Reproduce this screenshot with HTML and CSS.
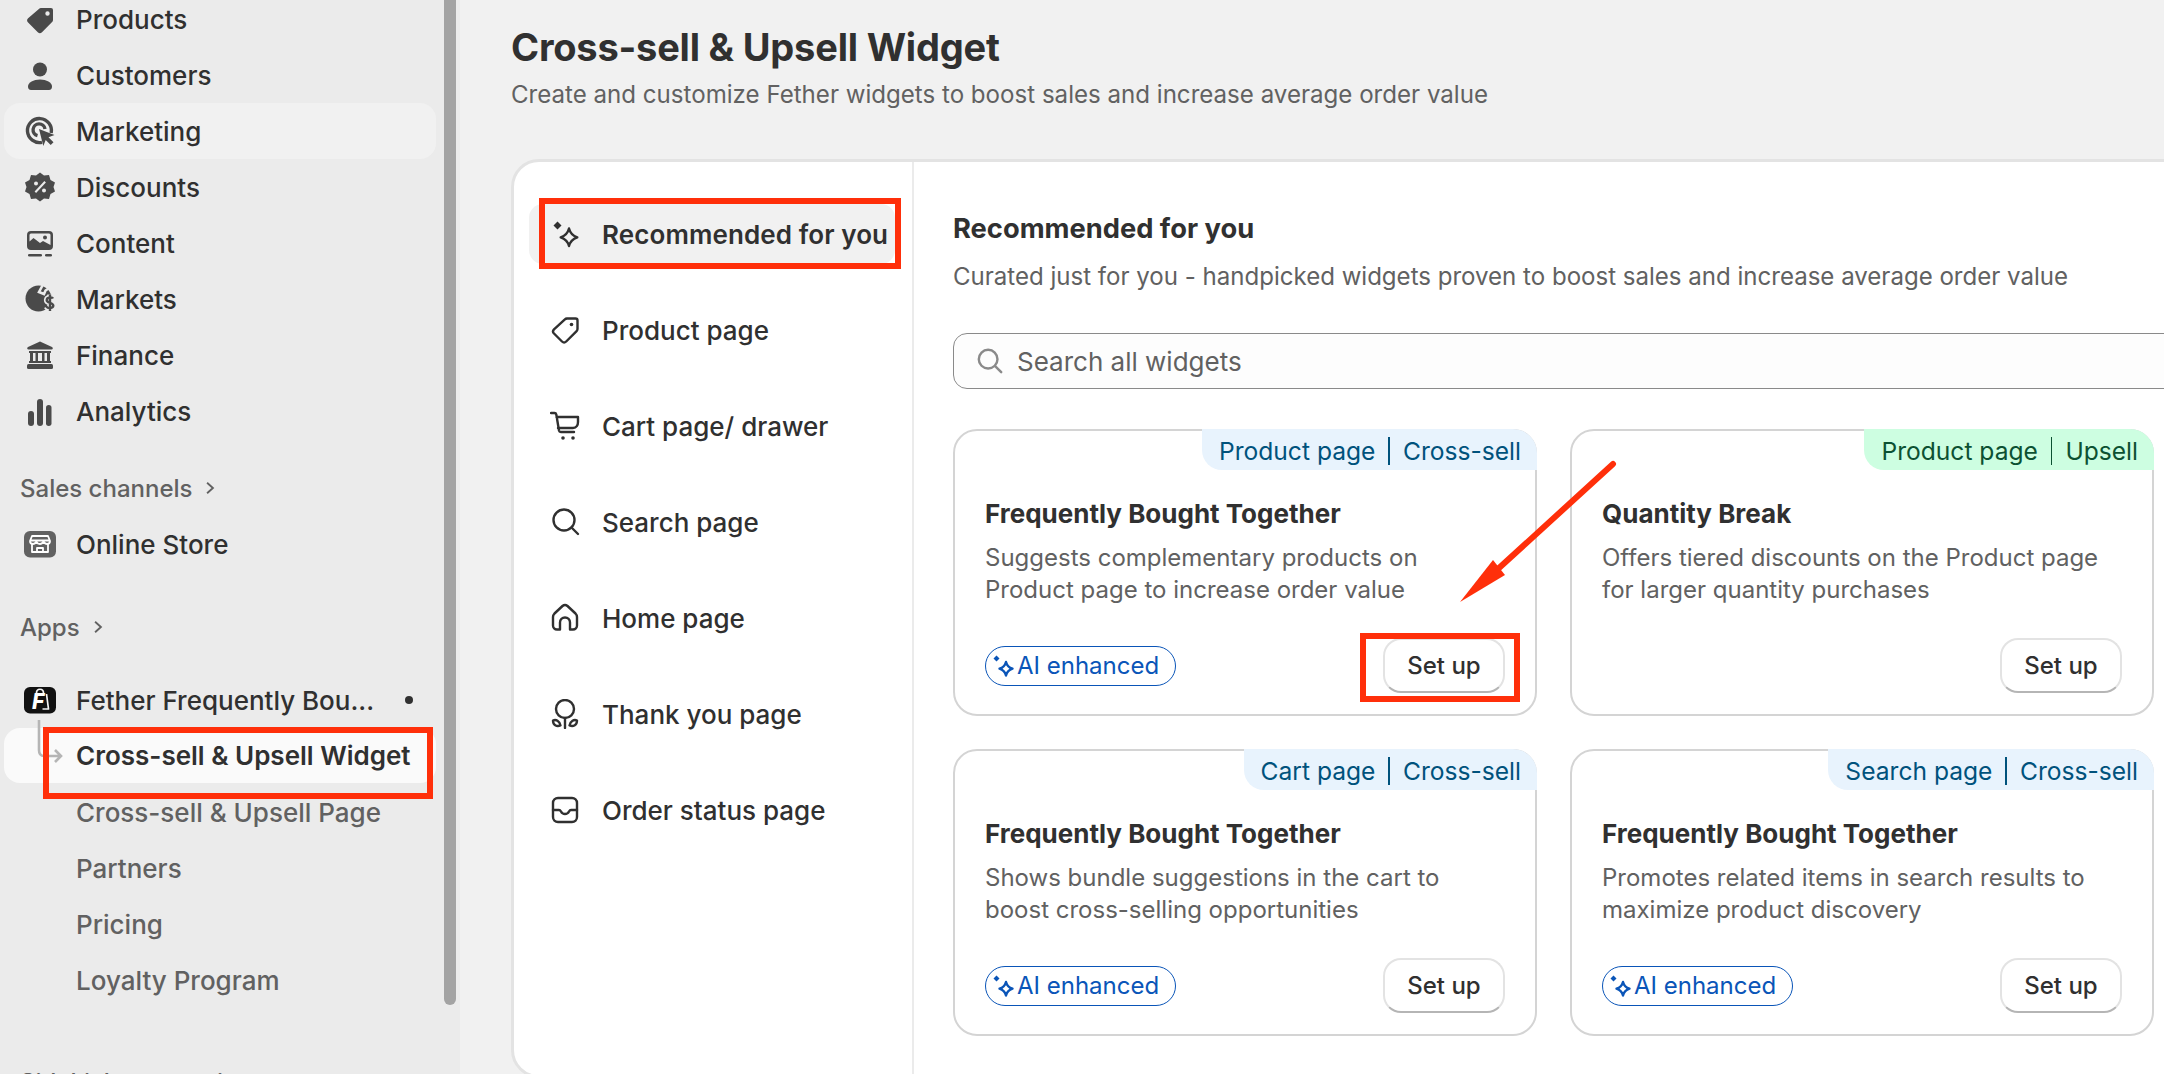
FILE: index.html
```html
<!DOCTYPE html>
<html lang="en">
<head>
<meta charset="utf-8">
<title>Cross-sell &amp; Upsell Widget</title>
<link rel="stylesheet" href="styles.css">
</head>
<body>
<aside class="sidebar">
  <nav class="nav">
    <a class="row"><svg class="ico" viewBox="0 0 30 30"><path fill-rule="evenodd" d="M16 4h10a2 2 0 0 1 2 2v10a3 3 0 0 1-.9 2.100L17 28.200a3 3 0 0 1-4.200 0L3.100 18.500a3 3 0 0 1 0-4.200L13.900 4.900A3 3 0 0 1 16 4zM22.500 7.300a2.200 2.200 0 1 0 0 4.400 2.200 2.200 0 0 0 0-4.400z"/></svg><span>Products</span></a>
    <a class="row"><svg class="ico" viewBox="0 0 30 30"><circle cx="15" cy="9.500" r="7"/><path d="M3 26.500c0-4 5.500-7 12-7s12 3 12 7c0 2-1 3.500-3 3.500H6c-2 0-3-1.500-3-3.500z"/></svg><span>Customers</span></a>
    <a class="row row-hover"><svg class="ico" viewBox="0 0 30 30"><g class="line-3"><path d="M17 26.300A12 12 0 1 1 26.200 17"/><path d="M12.500 19.700A6 6 0 1 1 20 13"/></g><path d="M14 13l15.500 6-6 2.300 5 5-2.800 2.700-5-5-2.400 6z"/></svg><span>Marketing</span></a>
    <a class="row"><svg class="ico" viewBox="0 0 30 30"><path fill-rule="evenodd" d="M15 .500l4 3 5-.5 1.500 5 4.500 2.500-1.500 4.500 1.500 4.500-4.500 2.500-1.500 5-5-.5-4 3-4-3-5 .5-1.500-5L0 19.500 1.500 15 0 10.500 4.500 8 6 3l5 .5zM11 9.500a2 2 0 1 0 0 4 2 2 0 0 0 0-4zm8 7a2 2 0 1 0 0 4 2 2 0 0 0 0-4zM19.400 9l-9.800 10.600 1.500 1.400 9.800-10.600z"/></svg><span>Discounts</span></a>
    <a class="row"><svg class="ico" viewBox="0 0 30 30"><path fill-rule="evenodd" d="M6 3h18a4 4 0 0 1 4 4v11a4 4 0 0 1-4 4H6a4 4 0 0 1-4-4V7a4 4 0 0 1 4-4zm0 2.500A1.500 1.500 0 0 0 4.500 7v6.500l4-3.500 6.500 5 3-2 7.500 4V7A1.500 1.500 0 0 0 24 5.500zM20 7.500a2 2 0 1 0 0 4 2 2 0 0 0 0-4z"/><rect x="3" y="26" width="14" height="2.600" rx="1.300"/><rect x="20" y="26" width="7" height="2.600" rx="1.300"/></svg><span>Content</span></a>
    <a class="row"><svg class="ico" viewBox="0 0 30 30"><circle cx="13.500" cy="14.500" r="13"/><path class="cut" d="M17.500 1.500l-3.500 6.500 5 2 1.500-3.500 3-2"/><path class="halo" d="M28 14.500c-.7-1.500-6-1.700-6.300 1.500-.2 3.400 6.600 2.200 6.600 5.600 0 3.200-5.700 3-6.800 1M25 10.500v16.500"/><path class="line-2" d="M28 14.500c-.7-1.500-6-1.700-6.300 1.500-.2 3.400 6.600 2.200 6.600 5.600 0 3.200-5.700 3-6.800 1M25 10.500v16.500"/></svg><span>Markets</span></a>
    <a class="row"><svg class="ico" viewBox="0 0 30 30"><path d="M15 1.500L27 7c1.300.6 1 2.500-.5 2.500h-23C2 9.500 1.700 7.600 3 7z"/><path d="M4 11h22v2h-1v8h1v2H4v-2h1v-8H4zm4 2v8h2.500v-8zm5 0v8h4v-8zm6.500 0v8H22v-8z" fill-rule="evenodd"/><rect x="2" y="24" width="26" height="5" rx="1.500"/></svg><span>Finance</span></a>
    <a class="row"><svg class="ico" viewBox="0 0 30 30"><rect x="3" y="15" width="6" height="15" rx="3"/><rect x="12" y="3" width="6" height="27" rx="3"/><rect x="21" y="9" width="5.500" height="21" rx="2.750"/></svg><span>Analytics</span></a>

    <div class="row heading heading-sales"><span>Sales channels</span><svg class="chev" viewBox="0 0 12 12"><path d="M3.500 1.500L8.500 6l-5 4.500"/></svg></div>
    <a class="row"><svg class="ico ico-box" viewBox="0 0 32 27"><rect width="32" height="26.500" rx="6" fill="#616161"/><path class="store" d="M8 5h16l2 5c0 2-1.500 3-3 3s-2.500-1-3.500-2c-1 1-2 2-3.500 2s-3-1-3.500-2c-1 1-2 2-3.500 2S6 12 6 10zM8 13v8h16v-8M7 9.500h18M13 21v-4h6v4"/></svg><span>Online Store</span></a>

    <div class="row heading heading-apps"><span>Apps</span><svg class="chev" viewBox="0 0 12 12"><path d="M3.500 1.500L8.500 6l-5 4.500"/></svg></div>
    <a class="row row-app"><svg class="ico ico-box" viewBox="0 0 32 27"><rect width="32" height="26.500" rx="6" fill="#111"/><path class="bag" d="M12.500 6c0-5 7-5 7 0M22.500 7l2 15h-6"/><text class="logo-f" x="8" y="22">F</text></svg><span class="app-name">Fether Frequently Bou...</span><i class="dot"></i></a>
    <a class="row sub sub-active"><svg class="connector" viewBox="0 0 30 50"><path d="M4 0v30c0 4 2 6 5 6h17M20 30l6 6-6 6"/></svg><span>Cross-sell &amp; Upsell Widget</span></a>
    <a class="row sub"><span>Cross-sell &amp; Upsell Page</span></a>
    <a class="row sub"><span>Partners</span></a>
    <a class="row sub"><span>Pricing</span></a>
    <a class="row sub"><span>Loyalty Program</span></a>

    <div class="row heading heading-side"><span>Sidekick connections</span><svg class="chev" viewBox="0 0 12 12"><path d="M3.500 1.500L8.500 6l-5 4.500"/></svg></div>
  </nav>
  <div class="scrollbar"></div>
</aside>

<main class="main">
  <header class="page-head">
    <h1>Cross-sell &amp; Upsell Widget</h1>
    <p>Create and customize Fether widgets to boost sales and increase average order value</p>
  </header>

  <section class="panel">
    <div class="tabs">
      <a class="tab tab-on"><svg class="ico2" viewBox="0 0 30 30"><path class="fillme" d="M7.500 2.500l4 4-4 4-4-4z"/><path d="M19 9.500c1.200 4.800 3.500 7.200 8.300 8.800-4.800 1.600-7.100 4-8.300 8.700-1.200-4.700-3.500-7.100-8.300-8.700 4.800-1.600 7.100-4 8.300-8.800z"/></svg><span>Recommended for you</span></a>
      <a class="tab"><svg class="ico2" viewBox="0 0 30 30"><path d="M17 3.500h8.500a2 2 0 0 1 2 2V14a3 3 0 0 1-.9 2.100L16.200 26.500a3 3 0 0 1-4.200 0l-8-8a3 3 0 0 1 0-4.200L14.900 4.400a3 3 0 0 1 2.100-.9z"/><circle class="fillme" cx="21.500" cy="9.500" r="1.800"/></svg><span>Product page</span></a>
      <a class="tab"><svg class="ico2" viewBox="0 0 30 30"><path d="M1 2h3.500c1 0 1.600.6 1.800 1.500L9 19.500c.2 1 .9 1.500 1.800 1.500H24M6.500 6H28v5c0 3-1.500 6-5 6H8"/><circle class="fillme" cx="13" cy="27" r="1.800"/><circle class="fillme" cx="23" cy="27" r="1.800"/></svg><span>Cart page/ drawer</span></a>
      <a class="tab"><svg class="ico2" viewBox="0 0 30 30"><circle cx="14" cy="13" r="10.500"/><path d="M21.500 20.500l6.500 6.500"/></svg><span>Search page</span></a>
      <a class="tab"><svg class="ico2" viewBox="0 0 30 30"><path d="M3 14c0-1.500.6-2.500 1.500-3.500l8-7.500a3.800 3.800 0 0 1 5 0l8 7.500c1 1 1.500 2 1.500 3.500v8.500a4 4 0 0 1-4 4h-3v-7a5 5 0 0 0-10 0v7H7a4 4 0 0 1-4-4z"/></svg><span>Home page</span></a>
      <a class="tab"><svg class="ico2" viewBox="0 0 30 30"><circle cx="15" cy="10" r="9"/><path d="M15 19v10M3 21.500c3-1.500 6.500.5 7.500 5-4 1.500-7.500-.5-7.500-5zM27 21.500c-3-1.500-6.500.5-7.500 5 4 1.500 7.500-.5 7.500-5z"/></svg><span>Thank you page</span></a>
      <a class="tab"><svg class="ico2" viewBox="0 0 30 30"><rect x="3" y="3" width="24" height="24" rx="5"/><path d="M3 15h6c1 0 1.500.6 2 1.500.8 1.600 2 2.500 4 2.500s3.200-.9 4-2.500c.5-.9 1-1.500 2-1.500h6"/></svg><span>Order status page</span></a>
    </div>

    <div class="content">
      <h2>Recommended for you</h2>
      <p class="lead">Curated just for you - handpicked widgets proven to boost sales and increase average order value</p>
      <div class="search"><svg class="search-ico" viewBox="0 0 30 30"><circle cx="13" cy="13" r="10"/><path d="M20.500 20.500l6.500 6.500"/></svg><span>Search all widgets</span></div>

      <div class="grid">
        <article class="card">
          <div class="tag tag-blue"><span>Product page</span><i></i><span>Cross-sell</span></div>
          <h3>Frequently Bought Together</h3>
          <p class="desc">Suggests complementary products on<br>Product page to increase order value</p>
          <div class="foot"><span class="ai"><svg class="ai-ico" viewBox="0 0 24 24"><path class="ai-fill" d="M5.500 1.500l3 3-3 3-3-3z"/><path d="M15 8c.9 3.600 2.700 5.500 6.500 6.700-3.800 1.300-5.600 3-6.500 6.800-.9-3.800-2.700-5.500-6.500-6.800C12.300 13.500 14.100 11.600 15 8z"/></svg>AI enhanced</span><button class="btn">Set up</button></div>
        </article>
        <article class="card">
          <div class="tag tag-green"><span>Product page</span><i></i><span>Upsell</span></div>
          <h3>Quantity Break</h3>
          <p class="desc">Offers tiered discounts on the Product page<br>for larger quantity purchases</p>
          <div class="foot foot-end"><button class="btn">Set up</button></div>
        </article>
        <article class="card">
          <div class="tag tag-blue"><span>Cart page</span><i></i><span>Cross-sell</span></div>
          <h3>Frequently Bought Together</h3>
          <p class="desc">Shows bundle suggestions in the cart to<br>boost cross-selling opportunities</p>
          <div class="foot"><span class="ai"><svg class="ai-ico" viewBox="0 0 24 24"><path class="ai-fill" d="M5.500 1.500l3 3-3 3-3-3z"/><path d="M15 8c.9 3.600 2.700 5.500 6.500 6.700-3.800 1.300-5.600 3-6.500 6.800-.9-3.800-2.700-5.500-6.500-6.800C12.300 13.500 14.100 11.600 15 8z"/></svg>AI enhanced</span><button class="btn">Set up</button></div>
        </article>
        <article class="card">
          <div class="tag tag-blue"><span>Search page</span><i></i><span>Cross-sell</span></div>
          <h3>Frequently Bought Together</h3>
          <p class="desc">Promotes related items in search results to<br>maximize product discovery</p>
          <div class="foot"><span class="ai"><svg class="ai-ico" viewBox="0 0 24 24"><path class="ai-fill" d="M5.500 1.500l3 3-3 3-3-3z"/><path d="M15 8c.9 3.600 2.700 5.500 6.500 6.700-3.800 1.300-5.600 3-6.500 6.800-.9-3.800-2.700-5.500-6.500-6.800C12.300 13.500 14.100 11.600 15 8z"/></svg>AI enhanced</span><button class="btn">Set up</button></div>
        </article>
      </div>
    </div>
  </section>
</main>

<div class="mark mark-nav"></div>
<div class="mark mark-tab"></div>
<div class="mark mark-btn"></div>
<svg class="arrow" viewBox="0 0 170 150"><path class="arrow-line" d="M157 4L43 108"/><path class="arrow-head" d="M4 142L37 100 49 115z"/></svg>
</body>
</html>
```

FILE: styles.css
```css
* { box-sizing: border-box; }
html, body { margin: 0; height: 1074px; overflow: hidden; }
body {
  position: relative;
  display: flex;
  background: #f1f1f1;
  color: #303030;
  font-family: Inter, "Noto Sans", "Liberation Sans", sans-serif;
}
h1, h2, h3, p { margin: 0; }

/* Sidebar */
.sidebar { position: relative; flex: 0 0 460px; height: 1074px; background: #ebebeb; overflow: hidden; }
.nav { display: flex; flex-direction: column; margin-top: -9px; }
.row {
  display: flex; align-items: center; flex: 0 0 56px; height: 56px;
  width: 432px; margin-left: 4px; padding-left: 21px;
  font-size: 26px; font-weight: 500; color: #303030; border-radius: 16px; position: relative;
}
.row-hover { background: #f1f1f1; }
.ico { flex: 0 0 30px; width: 30px; height: 30px; margin-right: 21px; fill: #4a4a4a; }
.ico-box { width: 32px; flex-basis: 32px; height: 27px; margin-left: -1px; margin-right: 20px; }
.line-3 { fill: none; stroke: #4a4a4a; stroke-width: 3.4; }
.line-2 { fill: none; stroke: #4a4a4a; stroke-width: 2.4; }
.halo { fill: none; stroke: #ebebeb; stroke-width: 5.6; }
.cut { fill: none; stroke: #ebebeb; stroke-width: 2.6; }
.store { fill: none; stroke: #fff; stroke-width: 1.800; stroke-linejoin: round; }
.bag { fill: none; stroke: #f4f4f4; stroke-width: 1.700; stroke-linejoin: round; }
.logo-f { font: italic 800 21px Inter, "Liberation Sans", sans-serif; fill: #fff; }
.heading { font-size: 24px; color: #616161; padding-left: 17px; gap: 11px; }
.heading-sales { margin-top: 21px; padding-left: 16px; }
.heading-apps { margin-top: 27px; padding-left: 16px; }
.heading-side { margin-top: 46px; padding-left: 16px; }
.chev { width: 14px; height: 14px; fill: none; stroke: #616161; stroke-width: 1.600; }
.row-app { margin-top: 17px; }
.app-name { width: 306px; white-space: nowrap; }
.dot { width: 8px; height: 8px; margin-left: 23px; background: #303030; border-radius: 50%; }
.sub { padding-left: 72px; color: #616161; font-weight: 500; }
.sub-active { background: #fafafa; color: #303030; font-weight: 600; height: 55px; flex-basis: 55px; margin-bottom: 1px; }
.connector {
  position: absolute; left: 31px; top: -8px; width: 30px; height: 50px;
  fill: none; stroke: #b5b5b5; stroke-width: 2.600;
}
.scrollbar { position: absolute; left: 444px; top: 0; width: 12px; height: 1005px; background: #a3a3a3; border-radius: 0 0 6px 6px; }

/* Main */
.main { flex: 1; min-width: 0; padding: 23px 0 0 51px; overflow: hidden; }
.page-head h1 { font-size: 38px; line-height: 48px; font-weight: 650; letter-spacing: -.2px; color: #303030; white-space: nowrap; }
.page-head p { margin-top: 8px; font-size: 24.100px; line-height: 32px; color: #616161; white-space: nowrap; }
.panel {
  display: flex; width: 1720px; height: 919px; margin-top: 48px;
  background: #fff; border: 3px solid #e3e3e3; border-radius: 28px;
}
.tabs {
  flex: 0 0 400px; display: flex; flex-direction: column; gap: 36px;
  padding: 42px 0 0 15px; border-right: 2px solid #ebebeb;
}
.tab {
  display: flex; align-items: center; height: 60px; width: 366px; padding-left: 21px;
  font-size: 26px; font-weight: 500; color: #303030; border-radius: 14px; white-space: nowrap;
}
.tab-on { background: #f1f1f1; font-weight: 600; letter-spacing: .1px; }
.ico2 { flex: 0 0 30px; width: 30px; height: 30px; margin-right: 22px; fill: none; stroke: #303030; stroke-width: 2.400; stroke-linejoin: round; stroke-linecap: round; }
.fillme { fill: #303030; stroke: none; }

.content { flex: 1; padding: 49px 0 0 39px; min-width: 0; }
.content h2 { font-size: 27.300px; line-height: 36px; font-weight: 650; color: #303030; }
.lead { margin-top: 14px; font-size: 24.050px; line-height: 32px; color: #616161; white-space: nowrap; }
.search {
  display: flex; align-items: center; height: 56px; margin-top: 40px; padding-left: 22px;
  width: 1300px; background: #fdfdfd; border: 1.500px solid #8a8a8a; border-radius: 14px;
  font-size: 26px; color: #616161;
}
.search-ico { width: 28px; height: 28px; margin-right: 13px; fill: none; stroke: #8a8a8a; stroke-width: 2.600; stroke-linecap: round; }
.grid { display: grid; grid-template-columns: 584px 584px; grid-auto-rows: 287px; column-gap: 33px; row-gap: 33px; margin-top: 40px; }
.card { display: flex; flex-direction: column; padding: 0 30px 21px; background: #fff; border: 2px solid #d4d4d4; border-radius: 24px; }
.tag {
  display: flex; align-items: center; align-self: flex-end; height: 41px; margin: -2px -32px 0 0;
  padding: 2px 16px 0 17px; border-radius: 0 24px 0 20px; font-size: 24.600px; white-space: nowrap;
}
.tag i { width: 1.500px; height: 28px; margin: 0 13px; background: currentColor; }
.tag-blue { background: #e8f3fd; color: #00527c; }
.tag-green { background: #cdfee1; color: #0c5132; }
.card h3 { margin-top: 26px; font-size: 26px; line-height: 36px; font-weight: 650; color: #303030; }
.desc { margin-top: 10px; font-size: 24px; line-height: 32px; color: #616161; white-space: nowrap; }
.foot { display: flex; justify-content: space-between; align-items: center; margin-top: auto; }
.foot-end { justify-content: flex-end; }
.ai {
  display: flex; align-items: center; height: 40px; padding: 0 16px 0 5px;
  border: 1.500px solid #0a55b8; border-radius: 20px; color: #0a55b8; font-size: 24px; white-space: nowrap;
}
.ai-ico { width: 24px; height: 24px; margin-right: 2px; fill: none; stroke: #0a55b8; stroke-width: 2.400; stroke-linejoin: round; }
.ai-fill { fill: #0a55b8; stroke: none; }
.btn {
  width: 122px; height: 55px; padding: 0; font: 500 24px Inter, "Noto Sans", sans-serif; color: #303030;
  background: #fff; border: 2px solid #e3e3e3; border-bottom: 2px solid #b5b5b5; border-radius: 18px;
}

/* Annotations laid over the page */
.mark { position: absolute; border: 6px solid #ff2f0a; }
.mark-nav { left: 43px; top: 727px; width: 390px; height: 72px; }
.mark-tab { left: 539px; top: 198px; width: 362px; height: 71px; }
.mark-btn { left: 1360px; top: 633px; width: 160px; height: 69px; }
.arrow { position: absolute; left: 1456px; top: 460px; width: 170px; height: 150px; }
.arrow-line { fill: none; stroke: #ff2f0a; stroke-width: 6; stroke-linecap: round; }
.arrow-head { fill: #ff2f0a; }
```
